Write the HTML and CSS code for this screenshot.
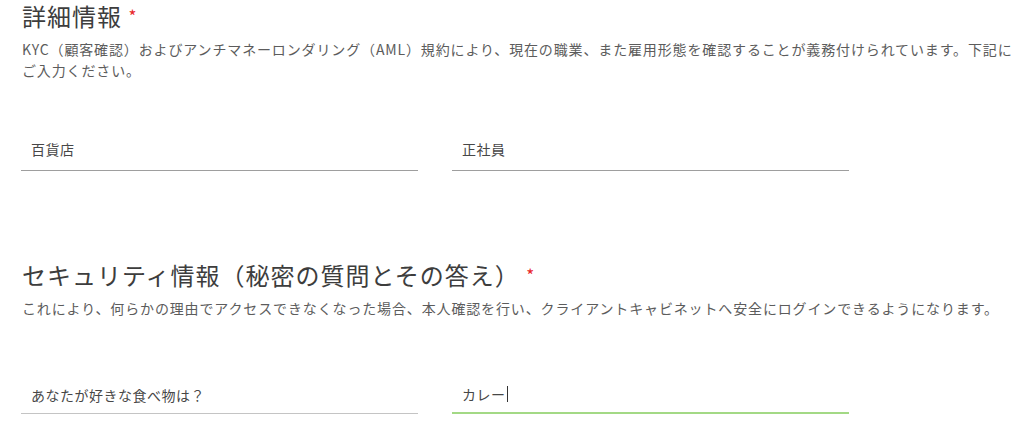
FILE: index.html
```html
<!DOCTYPE html>
<html lang="ja">
<head>
<meta charset="utf-8">
<link rel="stylesheet" href="styles.css">
</head>
<body>
<main class="page">
  <section class="block block-details">
    <h2 class="title">詳細情報 <span class="req">*</span></h2>
    <p class="desc">KYC（顧客確認）およびアンチマネーロンダリング（AML）規約により、現在の職業、また雇用形態を確認することが義務付けられています。下記にご入力ください。</p>
    <div class="fields fields-first">
      <div class="field"><span class="value">百貨店</span></div>
      <div class="field"><span class="value">正社員</span></div>
    </div>
  </section>
  <section class="block block-security">
    <h2 class="title">セキュリティ情報（秘密の質問とその答え） <span class="req">*</span></h2>
    <p class="desc">これにより、何らかの理由でアクセスできなくなった場合、本人確認を行い、クライアントキャビネットへ安全にログインできるようになります。</p>
    <div class="fields fields-second">
      <div class="field field-select"><span class="value">あなたが好きな食べ物は？</span></div>
      <div class="field field-focus"><span class="value">カレー</span><span class="caret"></span></div>
    </div>
  </section>
</main>
</body>
</html>
```
FILE: styles.css
```css
html, body {
  margin: 0;
  padding: 0;
  background: #ffffff;
}

body {
  font-family: "Noto Sans CJK JP", "Open Sans", sans-serif;
  color: #444;
}

.page {
  padding: 0 8px 0 22px;
}

.title {
  margin: 0;
  padding-top: 1px;
  font-size: 24px;
  line-height: 30px;
  font-weight: 400;
  letter-spacing: 1px;
  color: #3d3d3d;
}

.req {
  color: #e8262b;
  font-size: 17px;
  letter-spacing: 0;
  vertical-align: top;
  line-height: 30px;
}

.desc {
  margin: 8px 0 0 0;
  font-size: 14px;
  line-height: 21px;
  letter-spacing: 0.86px;
  color: #5c5c5c;
}

.fields {
  display: flex;
  gap: 34px;
  margin-left: -1px;
}

.fields-first {
  margin-top: 49px;
}

.fields-second {
  margin-top: 56px;
}

.block-security {
  margin-top: 88px;
}

.field {
  width: 397px;
  box-sizing: border-box;
  padding: 9px 10px 11px 10px;
  border-bottom: 1px solid #9e9e9e;
  font-size: 14px;
  line-height: 20px;
  letter-spacing: 0.5px;
  color: #474747;
  display: flex;
  align-items: center;
}

.fields-second .field {
  padding-bottom: 8px;
}

.field-select {
  border-bottom: 1px solid #c4c4c4;
}

.field-focus {
  border-bottom: 2px solid #a3d985;
}

.caret {
  display: inline-block;
  width: 0;
  height: 16px;
  border-left: 1px solid #333;
  margin-left: 1px;
}
```
